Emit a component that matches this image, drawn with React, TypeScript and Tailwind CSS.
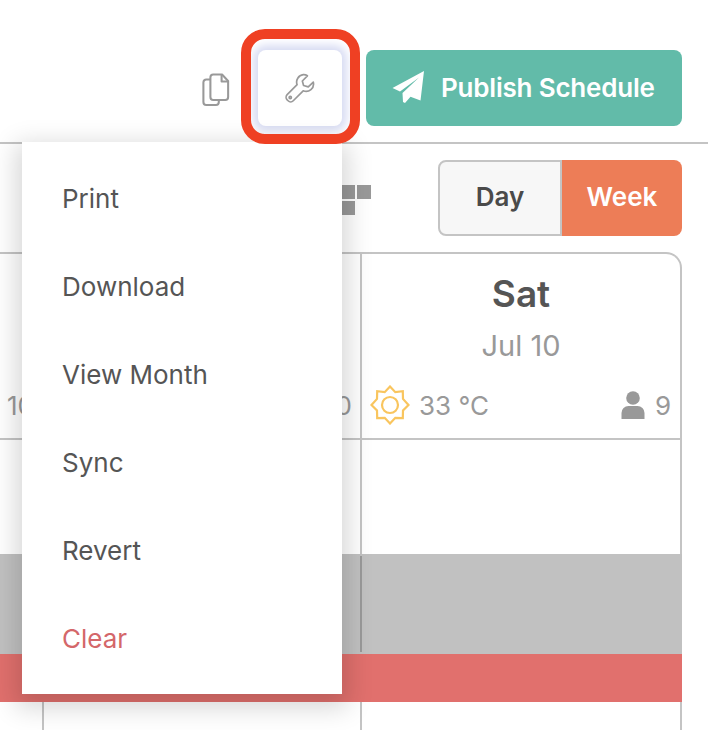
const menuItems = ['Print', 'Download', 'View Month', 'Sync', 'Revert'];

function CopyIcon() {
    return (
        <svg width="28" height="34" viewBox="0 0 30 34" fill="none" stroke="#999999" strokeWidth="2.2" strokeLinejoin="round" preserveAspectRatio="none">
            <path d="M9 6.500H4.500A3 3 0 0 0 1.500 9.500V29a3 3 0 0 0 3 3H15a3 3 0 0 0 3-3v-2" />
            <path d="M12 1.500H21.500L28 8v16a3 3 0 0 1-3 3H12a3 3 0 0 1-3-3V4.500a3 3 0 0 1 3-3Z" fill="#ffffff" />
            <path d="M21 2v6.500h7" />
        </svg>
    );
}

function WrenchIcon() {
    return (
        <svg width="30" height="30" viewBox="0 0 32 32" fill="none" stroke="#999999" strokeWidth="1.8" strokeLinejoin="round">
            <path d="M19.500 1.800a8 8 0 0 0-6.600 10.700L2.300 23.100a3.900 3.900 0 0 0 0 5.500l1 1a3.900 3.900 0 0 0 5.500 0l10.600-10.600a8 8 0 0 0 10.800-9.300l-5.400 5.100-5-1.500-1.300-4.800 5.400-5.500a8 8 0 0 0-3.900-1.200Z" />
            <circle cx="5.600" cy="26.200" r="1.200" />
        </svg>
    );
}

function PlaneIcon() {
    return (
        <svg width="33" height="33" viewBox="0 0 33 33" fill="#ffffff" className="shrink-0">
            <path d="M32 0 28.500 29.500 18.500 25.800 13 32 11 31 10.500 22 27 6.500 8 20.500 0.500 17Z" />
        </svg>
    );
}

function GridIcon() {
    return (
        <svg width="30" height="30" viewBox="0 0 30 30" fill="#999999">
            <rect x="0" y="0" width="13" height="14" />
            <rect x="15" y="0" width="14" height="14" />
            <rect x="0" y="16" width="13" height="14" />
        </svg>
    );
}

function SunIcon() {
    return (
        <svg width="40" height="40" viewBox="0 0 40 40" fill="none" stroke="#f9c55e" strokeWidth="2.2" strokeLinejoin="miter" className="shrink-0">
            <path d="M20 1.500 25.300 7.200 32.800 6.200 33 13.900 38.500 20 33 25.400 32.800 33 25.300 32.800 20 38.500 14.700 32.800 7.200 33 7 25.400 1.500 20 7 13.900 7.200 6.200 14.700 7.200Z" />
            <circle cx="20" cy="20" r="8" />
        </svg>
    );
}

function PersonIcon() {
    return (
        <svg width="24" height="28" viewBox="0 0 24 28" fill="#999999" className="shrink-0">
            <circle cx="12" cy="7" r="6.800" />
            <path d="M0.500 28V22a7 7 0 0 1 7-7h9a7 7 0 0 1 7 7v6Z" />
        </svg>
    );
}

export default function App() {
    return (
        <div className="relative w-[708px] h-[730px] overflow-hidden bg-white font-['Inter','Noto_Sans',sans-serif]">
            {/* header */}
            <div className="h-[144px] border-b-2 border-[#c4c4c4] flex items-start justify-end pt-[50px] pr-[26px]">
                <div className="mt-[23px] mr-[28px]">
                    <CopyIcon />
                </div>
                <div className="relative mr-[24px]">
                    <div className="w-[84px] h-[76px] rounded-lg bg-white shadow-[0_0_8px_5px_#d8dcf3] flex items-center justify-center">
                        <WrenchIcon />
                    </div>
                    <div className="absolute z-10 -left-[17px] -top-[21px] w-[119px] h-[115px] rounded-[24px] border-[10px] border-[#ef4023]" />
                </div>
                <button className="w-[316px] h-[76px] rounded-lg bg-[#62bba9] flex items-center pl-[26px] pb-[2px] gap-[16px] text-white text-[26px] font-semibold tracking-[-0.2px] whitespace-nowrap">
                    <PlaneIcon />
                    Publish Schedule
                </button>
            </div>

            {/* toolbar */}
            <div className="h-[108px] flex items-start justify-end pt-[16px] pr-[26px]">
                <div className="mt-[25px] mr-[66px]">
                    <GridIcon />
                </div>
                <div className="flex w-[244px] h-[76px]">
                    <div className="w-[124px] rounded-l-lg border-2 border-[#c4c4c4] bg-[#f7f7f7] text-[#4a4a4a] text-[26px] font-semibold flex items-center justify-center pb-[3px]">Day</div>
                    <div className="w-[120px] rounded-r-lg bg-[#ed7d57] text-white text-[26px] font-semibold flex items-center justify-center pb-[3px]">Week</div>
                </div>
            </div>

            {/* calendar */}
            <div className="mr-[26px] border-t-2 border-r-2 border-[#c4c4c4] rounded-tr-[16px]">
                <div className="flex h-[186px] border-b-2 border-[#c4c4c4]">
                    <div className="w-[43px] flex items-end pb-[16px] pl-[7px] text-[26px] leading-[32px] text-[#999999] overflow-hidden">10</div>
                    <div className="w-[319px] border-r-2 border-[#c4c4c4] flex items-end justify-end pb-[16px] pr-[8px] text-[26px] leading-[32px] text-[#999999]">0</div>
                    <div className="flex-1 flex flex-col items-center pt-[17px]">
                        <div className="text-[37px] leading-[46px] font-semibold text-[#555555]">Sat</div>
                        <div className="mt-[11px] text-[29px] leading-[36px] text-[#999999]">Jul 10</div>
                        <div className="mt-[21px] w-full flex items-center pl-[8px] pr-[9px] text-[26px] text-[#999999]">
                            <SunIcon />
                            <span className="ml-[9px]">33 °C</span>
                            <span className="ml-auto mr-[10px]"><PersonIcon /></span>
                            <span>9</span>
                        </div>
                    </div>
                </div>
                <div className="flex h-[114px]">
                    <div className="w-[362px] border-r-2 border-[#c4c4c4]" />
                </div>
            </div>
            <div className="mr-[26px] h-[100px] bg-[#c1c1c1] flex">
                <div className="w-[362px] border-r-2 border-[#999999] my-[2px]" />
            </div>
            <div className="mr-[26px] h-[48px] bg-[#e1706d]" />
            <div className="mr-[26px] h-[30px] border-r-2 border-[#c4c4c4] flex">
                <div className="w-[44px] border-r-2 border-[#c4c4c4]" />
                <div className="w-[318px] border-r-2 border-[#c4c4c4]" />
            </div>

            {/* dropdown menu */}
            <div className="absolute left-[22px] top-[142px] w-[320px] h-[552px] bg-white shadow-[0_8px_24px_6px_rgba(0,0,0,0.16)] flex flex-col pt-[12px]">
                {menuItems.map((item) => (
                    <div key={item} className="h-[88px] flex items-center pl-[40px] text-[26px] text-[#555555]">
                        {item}
                    </div>
                ))}
                <div className="h-[88px] flex items-center pl-[40px] text-[26px] text-[#d4676a]">Clear</div>
            </div>
        </div>
    );
}
